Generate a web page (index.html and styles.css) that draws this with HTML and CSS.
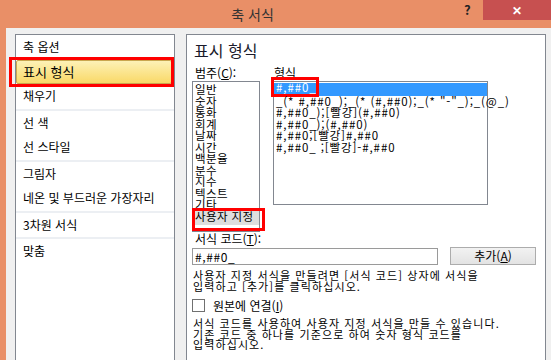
FILE: index.html
```html
<!DOCTYPE html>
<html lang="ko">
<head>
  <meta charset="UTF-8">
  <meta name="viewport" content="width=device-width, initial-scale=1.0">
  <title>축 서식</title>
  <link rel="stylesheet" href="styles.css">
</head>
<body>
  <div class="window">
    <header class="titlebar">
      <span class="title">축 서식</span>
      <span class="help">?</span>
      <span class="close">&#x2715;</span>
    </header>

    <div class="frame">
      <nav class="sidebar">
        <ul class="group">
          <li>축 옵션</li>
          <li class="current">표시 형식<span class="mark"></span></li>
          <li>채우기</li>
        </ul>
        <ul class="group">
          <li>선 색</li>
          <li>선 스타일</li>
        </ul>
        <ul class="group">
          <li>그림자</li>
          <li>네온 및 부드러운 가장자리</li>
        </ul>
        <ul class="group">
          <li>3차원 서식</li>
        </ul>
        <ul class="group">
          <li>맞춤</li>
        </ul>
      </nav>

      <section class="pane">
        <h1>표시 형식</h1>

        <div class="pickers">
          <div class="picker category">
            <div class="caption">범주(<u>C</u>):</div>
            <ul class="listbox">
              <li>일반</li>
              <li>숫자</li>
              <li>통화</li>
              <li>회계</li>
              <li>날짜</li>
              <li>시간</li>
              <li>백분율</li>
              <li>분수</li>
              <li>지수</li>
              <li>텍스트</li>
              <li>기타</li>
              <li class="picked">사용자 지정<span class="mark"></span></li>
            </ul>
          </div>
          <div class="picker formats">
            <div class="caption">형식</div>
            <ul class="listbox">
              <li class="selected">#,##0_<span class="mark"></span></li>
              <li>_(* #,##0_);_(* (#,##0);_(* "-"_);_(@_)</li>
              <li>#,##0_);[빨강](#,##0)</li>
              <li>#,##0_);(#,##0)</li>
              <li>#,##0;[빨강]#,##0</li>
              <li>#,##0_ ;[빨강]-#,##0</li>
            </ul>
          </div>
        </div>

        <div class="caption">서식 코드(<u>T</u>):</div>
        <div class="code-row">
          <div class="code-input">#,##0_</div>
          <button class="add">추가(<u>A</u>)</button>
        </div>

        <p class="hint">사용자 지정 서식을 만들려면 [서식 코드] 상자에 서식을<br>입력하고 [추가]를 클릭하십시오.</p>

        <div class="check">
          <span class="box"></span>
          <span>원본에 연결(<u>I</u>)</span>
        </div>

        <p class="hint">서식 코드를 사용하여 사용자 지정 서식을 만들 수 있습니다.<br>기존 코드 중 하나를 기준으로 하여 숫자 형식 코드를<br>입력하십시오.</p>
      </section>
    </div>
  </div>
</body>
</html>
```

FILE: styles.css
```css
:root {
  --frame: #e98f67;
  --face: #f0f0f0;
  --edge: #828790;
  --mark: #f00;
  --pick: #3399ff;
}

* {
  margin: 0;
  padding: 0;
  box-sizing: border-box;
}

body {
  width: 551px;
  height: 360px;
  overflow: hidden;
  background: var(--face);
  font-family: "Noto Sans CJK KR", "Noto Sans", sans-serif;
  font-size: 12px;
  color: #000;
}

ul {
  list-style: none;
}

/* title bar */
.titlebar {
  height: 28px;
  background: var(--frame);
  display: flex;
  align-items: flex-start;
}

.title {
  flex: 1;
  padding-left: 50px;
  text-align: center;
  font-size: 14px;
  line-height: 28px;
  color: #333;
}

.help {
  width: 28px;
  line-height: 20px;
  font-size: 13px;
  font-weight: bold;
  color: #222;
  padding-left: 9px;
}

.close {
  width: 68px;
  height: 20px;
  background: #c75050;
  color: #fff;
  text-align: center;
  font-size: 12px;
  font-weight: bold;
  line-height: 20px;
}

/* body */
.frame {
  display: flex;
  gap: 11px;
  height: 332px;
  padding: 6px 0 0 9px;
  border-left: 6px solid var(--frame);
}

.sidebar {
  width: 160px;
  height: 340px;
  flex-shrink: 0;
  background: #fff;
  border: 1px solid var(--edge);
}

.group + .group {
  border-top: 2px solid #eceff3;
}

.group li {
  position: relative;
  height: 24.5px;
  line-height: 24.5px;
  padding-left: 7px;
  margin-right: 2px;
  white-space: nowrap;
}

.group li.current {
  background: linear-gradient(#fdf1b6, #f9d968);
  border: 1px solid #c9a64f;
  border-radius: 2px;
  line-height: 22.5px;
  padding-left: 6px;
  font-size: 13px;
}

.current .mark {
  position: absolute;
  left: -8px;
  right: -3px;
  top: -4px;
  bottom: -4px;
  border: 3px solid var(--mark);
}

.pane {
  width: 360px;
  height: 340px;
  flex-shrink: 0;
  background: #fff;
  border: 1px solid var(--edge);
  padding: 5px 0 0 5px;
}

.pane h1 {
  font-size: 16px;
  font-weight: normal;
  line-height: 20px;
  color: #1a1a2a;
  padding-left: 2px;
}

.caption {
  line-height: 14px;
  padding-left: 3px;
  white-space: nowrap;
}

.pickers {
  display: flex;
  gap: 13px;
  margin-top: 6px;
}

.listbox {
  margin-top: 1px;
  border: 1px solid var(--edge);
  background: #fff;
}

.listbox li {
  position: relative;
  line-height: 11.5px;
  white-space: nowrap;
}

.category {
  width: 68px;
}

.category .listbox {
  height: 151px;
  padding-top: 2px;
}

.category li {
  padding-left: 2px;
  font-size: 11.5px;
  letter-spacing: 0.4px;
}

.category li.picked {
  background: #dedede;
  padding-bottom: 2.5px;
}

.picked .mark {
  position: absolute;
  left: -1px;
  right: -6px;
  top: -2.5px;
  bottom: -6px;
  border: 3px solid var(--mark);
}

.formats {
  width: 215px;
}

.formats .caption {
  padding-left: 1px;
}

.formats .listbox {
  height: 124px;
  padding-top: 1px;
}

.formats li {
  padding-left: 2px;
  font-size: 11.5px;
  letter-spacing: 0.9px;
}

.formats li.selected {
  background: var(--pick);
  color: #fff;
  line-height: 8px;
  padding-bottom: 4.5px;
}

.selected .mark {
  position: absolute;
  left: -3px;
  top: -6px;
  width: 48px;
  height: 20px;
  border: 3px solid var(--mark);
}

.code-row {
  display: flex;
  align-items: center;
  gap: 12px;
  margin-top: 1px;
}

.code-input {
  width: 246px;
  height: 17px;
  border: 1px solid #9a9a9a;
  line-height: 15px;
  padding-left: 2px;
  letter-spacing: 0.6px;
}

.add {
  width: 86px;
  height: 18px;
  border: 1px solid #acacac;
  background: linear-gradient(#f2f2f2, #e3e3e3);
  font-family: inherit;
  font-size: 12px;
  line-height: 16px;
  color: #000;
}

.hint {
  margin-top: 5px;
  font-size: 11px;
  line-height: 10.5px;
  letter-spacing: 1.1px;
  padding-left: 1px;
  white-space: nowrap;
}

.check {
  display: flex;
  align-items: center;
  gap: 8px;
  height: 14px;
  margin-top: 7px;
}

.check .box {
  width: 13px;
  height: 13px;
  border: 1px solid #707070;
  background: #fff;
}

.check + .hint {
  margin-top: 6px;
}
```
